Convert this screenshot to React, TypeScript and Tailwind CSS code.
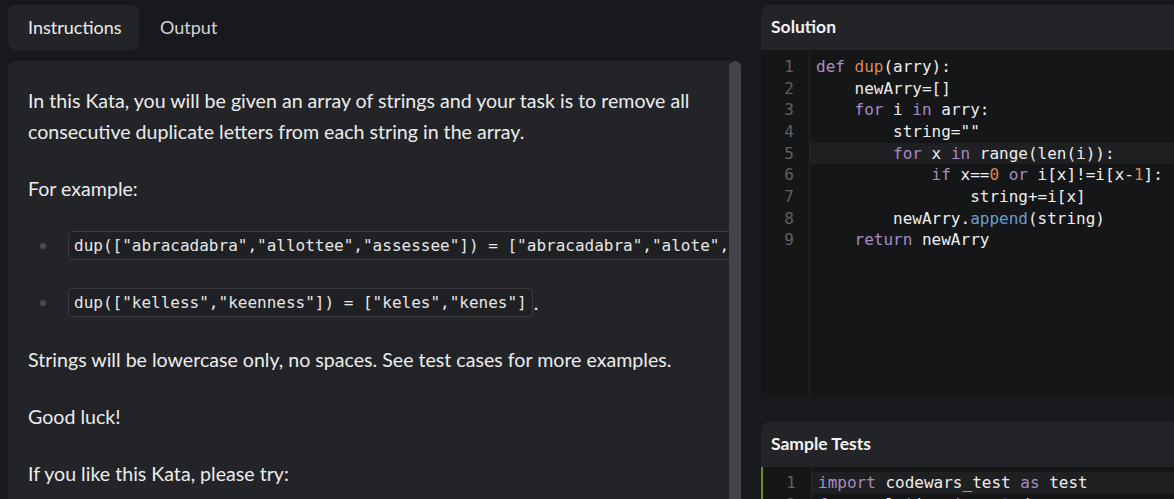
import React from "react";

type Tok = [string, string?];

const KW = "text-[#a78bc4]";
const FN = "text-[#d98a4e]";
const NUM = "text-[#d98a4e]";
const MT = "text-[#6a9fcf]";

const solution: Tok[][] = [
  [["def", KW], [" "], ["dup", FN], ["(arry):"]],
  [["    newArry=[]"]],
  [["    "], ["for", KW], [" i "], ["in", KW], [" arry:"]],
  [["        string=\"\""]],
  [["        "], ["for", KW], [" x "], ["in", KW], [" range(len(i)):"]],
  [["            "], ["if", KW], [" x=="], ["0", NUM], [" "], ["or", KW], [" i[x]!=i[x-"], ["1", NUM], ["]:"]],
  [["                string+=i[x]"]],
  [["        newArry."], ["append", MT], ["(string)"]],
  [["    "], ["return", KW], [" newArry"]],
];

const tests: Tok[][] = [
  [["import", KW], [" codewars_test "], ["as", KW], [" test"]],
  [["from", KW], [" solution "], ["import", KW], [" dup"]],
];

const mono = { fontFamily: '"DejaVu Sans Mono", "Liberation Mono", monospace' };

function CodeLines({ lines, active }: { lines: Tok[][]; active: number }) {
  return (
    <div className="flex flex-col text-[16px] leading-[21.67px] text-[#eeeeee]" style={mono}>
      {lines.map((l, i) => (
        <div key={i} className="flex h-[21.67px]">
          <div className="w-[49px] shrink-0 bg-[#151618] border-r border-[#26272a] pr-[15px] text-right text-[#5d6066]">
            {i + 1}
          </div>
          <div className={`flex-1 pl-[6px] whitespace-pre ${i === active ? "bg-[#1f2022]" : ""}`}>
            {l.map((t, j) => (
              <span key={j} className={t[1] ?? ""}>
                {t[0]}
              </span>
            ))}
          </div>
        </div>
      ))}
    </div>
  );
}

function Code({ children }: { children: React.ReactNode }) {
  return (
    <code
      className="inline-block h-[29px] leading-[27px] px-[5px] border border-[#3b3c40] rounded-[4px] bg-[#1f2023] text-[16px] text-[#e6e6e6] whitespace-pre align-middle"
      style={mono}
    >
      {children}
    </code>
  );
}

export default function App() {
  return (
    <div
      className="w-[1174px] h-[499px] overflow-hidden bg-[#18191c] flex"
      style={{ fontFamily: 'Lato, "Noto Sans", sans-serif' }}
    >
      {/* Left column */}
      <div className="ml-[8px] w-[733px] shrink-0 flex flex-col">
        <div className="pt-[5px] h-[61px] flex items-start">
          <div className="h-[45px] w-[131px] rounded-[8px] bg-[#232428] flex items-center pl-[20px] text-[18px] text-[#ececec]">
            Instructions
          </div>
          <div className="h-[45px] ml-[21px] flex items-center text-[18px] text-[#d4d4d4]">Output</div>
        </div>
        <div className="flex-1 flex min-h-0">
          <div className="w-[721px] bg-[#232428] rounded-tl-[8px] overflow-hidden pl-[20px] pt-[24px]">
            <div className="flex flex-col gap-[26px] text-[19.6px] leading-[31px] text-[#ececec]">
              <p className="whitespace-nowrap">
                In this Kata, you will be given an array of strings and your task is to remove all
                <br />
                consecutive duplicate letters from each string in the array.
              </p>
              <p>For example:</p>
              <div className="h-[31px] flex items-center whitespace-nowrap">
                <span className="w-[6px] h-[6px] rounded-full bg-[#4a4b4f] ml-[12px] mr-[22px] shrink-0" />
                <Code>{'dup(["abracadabra","allottee","assessee"]) = ["abracadabra","alote","asese"]'}</Code>
                <span>.</span>
              </div>
              <div className="h-[31px] flex items-center whitespace-nowrap">
                <span className="w-[6px] h-[6px] rounded-full bg-[#4a4b4f] ml-[12px] mr-[22px] shrink-0" />
                <Code>{'dup(["kelless","keenness"]) = ["keles","kenes"]'}</Code>
                <span className="ml-[1px]">.</span>
              </div>
              <p className="whitespace-nowrap">Strings will be lowercase only, no spaces. See test cases for more examples.</p>
              <p>Good luck!</p>
              <p>If you like this Kata, please try:</p>
            </div>
          </div>
          <div className="w-[12px] bg-[#454547] rounded-t-[6px]" />
        </div>
      </div>

      {/* Right column */}
      <div className="ml-[20px] flex-1 flex flex-col pt-[5px] min-w-0">
        <div className="h-[45px] bg-[#232428] rounded-tl-[8px] flex items-center pl-[10px] text-[17.5px] font-bold text-[#f2f2f2]">
          Solution
        </div>
        <div className="h-[347px] bg-[#151618] flex">
          <div className="flex-1 flex flex-col">
            <div className="h-[6px] flex">
              <div className="w-[49px] border-r border-[#26272a]" />
            </div>
            <CodeLines lines={solution} active={4} />
            <div className="flex-1 flex">
              <div className="w-[49px] border-r border-[#26272a]" />
            </div>
          </div>
        </div>
        <div className="h-[25px]" />
        <div className="h-[45px] bg-[#232428] rounded-tl-[8px] flex items-center pl-[10px] text-[17.5px] font-bold text-[#f2f2f2]">
          Sample Tests
        </div>
        <div className="flex-1 bg-[#151618] border-l-[2px] border-[#6f8e22] overflow-hidden flex flex-col">
          <div className="h-[5px] flex shrink-0">
            <div className="w-[49px] border-r border-[#26272a]" />
          </div>
          <CodeLines lines={tests} active={0} />
        </div>
      </div>
    </div>
  );
}
